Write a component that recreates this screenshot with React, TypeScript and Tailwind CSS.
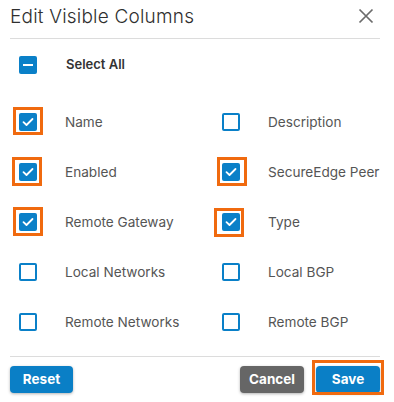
import React from 'react'

type Col = { label: string; checked: boolean; marked?: string }

const rows: [Col, Col][] = [
  [
    { label: 'Name', checked: true, marked: '-left-[6px] -top-[6px] w-[30px] h-[28px]' },
    { label: 'Description', checked: false },
  ],
  [
    { label: 'Enabled', checked: true, marked: '-left-[7px] -top-[6px] w-[30px] h-[29px]' },
    { label: 'SecureEdge Peer', checked: true, marked: '-left-[5px] -top-[6px] w-[30px] h-[29px]' },
  ],
  [
    { label: 'Remote Gateway', checked: true, marked: '-left-[6px] -top-[6px] w-[30px] h-[29px]' },
    { label: 'Type', checked: true, marked: '-left-[8px] -top-[5px] w-[30px] h-[29px]' },
  ],
  [
    { label: 'Local Networks', checked: false },
    { label: 'Local BGP', checked: false },
  ],
  [
    { label: 'Remote Networks', checked: false },
    { label: 'Remote BGP', checked: false },
  ],
]

function Checkbox({ checked, indeterminate, marked }: { checked?: boolean; indeterminate?: boolean; marked?: string }) {
  const filled = checked || indeterminate
  return (
    <span className="relative flex w-[18px] h-[18px] shrink-0">
      <span
        className={
          filled
            ? 'flex w-[18px] h-[18px] items-center justify-center rounded-[2px] bg-[#0a80c8]'
            : 'flex w-[18px] h-[18px] rounded-[2px] border-2 border-[#0a80c8] bg-white'
        }
      >
        {checked && (
          <svg width="12" height="10" viewBox="0 0 12 10" fill="none">
            <path d="M1.5 5.2 L4.5 8 L10.5 2" stroke="white" strokeWidth="1.8" strokeLinecap="round" strokeLinejoin="round" />
          </svg>
        )}
        {indeterminate && <span className="w-[10px] h-[2px] bg-white" />}
      </span>
      {marked && <span className={`absolute border-[3px] border-[#f06a0f] ${marked}`} />}
    </span>
  )
}

export default function App() {
  return (
    <div className="w-[394px] h-[402px] bg-white overflow-hidden font-['Inter',sans-serif] text-[#444]">
      {/* Header */}
      <div className="ml-[10px] mr-[14px] h-[39px] flex items-center justify-between border-b border-[#dcdcdc]">
        <span className="text-[19px] font-light text-[#2f2f2f] tracking-[0.2px] pb-[4px]">Edit Visible Columns</span>
        <svg width="16" height="16" viewBox="0 0 16 16" className="mr-[6px] mb-[6px]">
          <path d="M1.5 1.5 L14.5 14.5 M14.5 1.5 L1.5 14.5" stroke="#6b6b6b" strokeWidth="1.7" />
        </svg>
      </div>

      {/* Select all */}
      <div className="h-[50px] pt-[2px] px-[19px] flex items-center">
        <Checkbox indeterminate />
        <span className="ml-[29px] text-[13px] font-semibold text-[#333]">Select All</span>
      </div>

      {/* Columns */}
      <div className="mt-[8px] px-[19px] grid grid-cols-[203px_1fr]">
        {rows.map((pair) =>
          pair.map((c) => (
            <div key={c.label} className="h-[50px] flex items-center">
              <Checkbox checked={c.checked} marked={c.marked} />
              <span className="ml-[28px] text-[13.6px] whitespace-nowrap text-[#555]">{c.label}</span>
            </div>
          ))
        )}
      </div>

      {/* Footer */}
      <div className="ml-[10px] mr-[14px] mt-[9px] border-t border-[#dcdcdc] pt-[9px] flex items-center">
        <button className="w-[63px] h-[27px] rounded-[4px] bg-[#0a7fc6] text-white text-[13.5px] font-bold shadow-[0_1px_3px_rgba(0,0,0,0.3)]">
          Reset
        </button>
        <div className="ml-auto flex items-center gap-[12px]">
          <button className="w-[64px] h-[27px] rounded-[4px] bg-[#666] text-white text-[13.5px] font-bold shadow-[0_1px_3px_rgba(0,0,0,0.3)]">
            Cancel
          </button>
          <span className="relative flex">
            <button className="w-[64px] h-[27px] rounded-[4px] bg-[#0a7fc6] text-white text-[13.5px] font-bold shadow-[0_1px_3px_rgba(0,0,0,0.3)]">
              Save
            </button>
            <span className="absolute -left-[4px] -top-[6px] w-[72px] h-[35px] border-[3px] border-[#f06a0f]" />
          </span>
        </div>
      </div>
    </div>
  )
}
